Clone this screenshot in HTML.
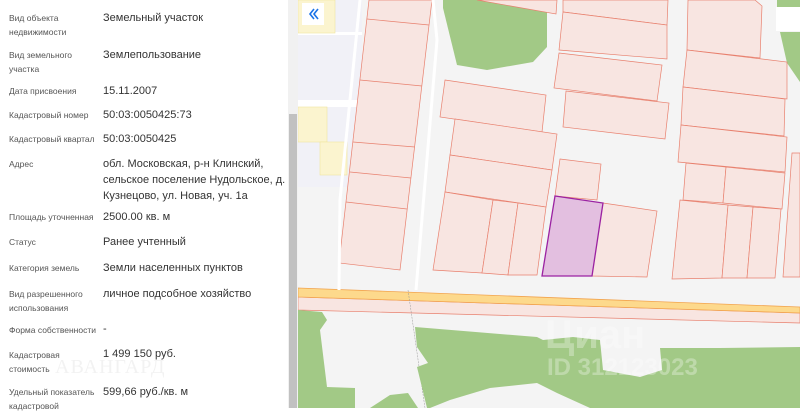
<!DOCTYPE html>
<html><head><meta charset="utf-8"><style>
body{margin:0;width:800px;height:408px;overflow:hidden;background:#fff;font-family:"Liberation Sans",sans-serif;position:relative}
.l{position:absolute;left:9px;font-size:8.5px;color:#555;line-height:14px}
.v{position:absolute;left:103px;font-size:11px;color:#333;line-height:16px}
</style></head><body>
<div class="l" style="top:11px">Вид объекта<br>недвижимости</div><div class="v" style="top:10px">Земельный участок</div>
<div class="l" style="top:48px">Вид земельного<br>участка</div><div class="v" style="top:47px">Землепользование</div>
<div class="l" style="top:84px">Дата присвоения</div><div class="v" style="top:83px">15.11.2007</div>
<div class="l" style="top:108px">Кадастровый номер</div><div class="v" style="top:107px">50:03:0050425:73</div>
<div class="l" style="top:132px">Кадастровый квартал</div><div class="v" style="top:131px">50:03:0050425</div>
<div class="l" style="top:157px">Адрес</div><div class="v" style="top:156px">обл. Московская, р-н Клинский,<br>сельское поселение Нудольское, д.<br>Кузнецово, ул. Новая, уч. 1а</div>
<div class="l" style="top:210px">Площадь уточненная</div><div class="v" style="top:209px">2500.00 кв. м</div>
<div class="l" style="top:235px">Статус</div><div class="v" style="top:234px">Ранее учтенный</div>
<div class="l" style="top:261px">Категория земель</div><div class="v" style="top:260px">Земли населенных пунктов</div>
<div class="l" style="top:287px">Вид разрешенного<br>использования</div><div class="v" style="top:286px">личное подсобное хозяйство</div>
<div class="l" style="top:323px">Форма собственности</div><div class="v" style="top:321px">-</div>
<div class="l" style="top:348px">Кадастровая<br>стоимость</div><div class="v" style="top:346px">1 499 150 руб.</div>
<div class="l" style="top:385px">Удельный показатель<br>кадастровой</div><div class="v" style="top:384px">599,66 руб./кв. м</div>
<div style="position:absolute;left:55px;top:356px;font-family:'Liberation Serif',serif;font-size:20px;color:rgba(150,150,150,0.12);letter-spacing:1px">АВАНГАРД</div>
<div style="position:absolute;left:288px;top:0;width:10px;height:408px;background:#f1f1f1"></div>
<div style="position:absolute;left:289px;top:114px;width:8px;height:294px;background:#c1c1c1"></div>
<svg style="position:absolute;left:0;top:0" width="800" height="408" viewBox="0 0 800 408">
<defs><clipPath id="c"><rect x="298" y="0" width="502" height="408"/></clipPath></defs>
<g clip-path="url(#c)">
<rect x="298" y="0" width="502" height="408" fill="#f4f4f4"/>
<rect x="298" y="0" width="64" height="187" fill="#f1f1f7"/>
<rect x="298" y="32" width="64" height="3" fill="#fff"/><rect x="298" y="100" width="64" height="7" fill="#fff"/>
<g fill="#fbf4cf" stroke="#f0e4a0" stroke-width=".6">
<rect x="298" y="0" width="37" height="33"/><rect x="298" y="107" width="29" height="35"/><rect x="320" y="142" width="27" height="33"/></g>
<path d="M443,0 L547,0 L547,47 L533,62 L487,70 L457,65 L443,8Z" fill="#a2c986"/>
<path d="M777,0H800V7H777Z M780,32H800V82L787,63Z" fill="#a2c986"/>
<rect x="776" y="7" width="24" height="24" fill="#fff"/>
<g fill="#f8e5e1" stroke="#e8806e" stroke-width=".7">
<path d="M369,0 L432,0 L400,270 L339,263Z"/>
<path d="M367,19 L429,25 M360,80 L422,86 M353,142 L415,147 M350,172 L411,178 M346,202 L407,209" fill="none"/>
<path d="M477,0 L557,0 L556,14Z"/>
<path d="M445,80 L546,95 L542,132 L440,117Z"/>
<path d="M455,119 L557,134 L552,170 L450,155Z"/>
<path d="M450,155 L552,170 L546,207 L445,192Z"/>
<path d="M445,192 L493,200 L482,273 L433,270Z"/>
<path d="M493,200 L518,203 L508,275 L482,273Z"/>
<path d="M518,203 L546,207 L537,275 L508,275Z"/>
<path d="M563,0 L668,0 L667,25 L563,12Z"/>
<path d="M563,12 L667,25 L667,59 L559,50Z"/>
<path d="M559,53 L662,65 L657,101 L554,88Z"/>
<path d="M566,91 L669,103 L665,139 L563,127Z"/>
<path d="M560,159 L601,164 L597,200 L555,196Z"/>
<path d="M603,203 L657,211 L647,277 L592,276Z"/>
<path d="M688,0 L755,0 L762,6 L760,58 L687,50Z"/>
<path d="M687,50 L787,62 L787,99 L683,87Z"/>
<path d="M683,87 L785,99 L784,136 L681,125Z"/>
<path d="M681,125 L787,137 L785,172 L678,162Z"/>
<path d="M686,163 L726,167 L723,203 L683,200Z"/>
<path d="M726,167 L785,173 L782,209 L723,203Z"/>
<path d="M680,200 L728,205 L722,278 L672,279Z"/>
<path d="M728,205 L753,207 L747,278 L722,278Z"/>
<path d="M753,207 L781,209 L775,278 L747,278Z"/>
<path d="M792,153 L800,153 L800,277 L783,277Z"/>
<path d="M298,297 L800,313 L800,323 L298,310Z"/>
</g>
<path d="M555,196 L603,203 L592,276 L542,276Z" fill="#e3bfe0" stroke="#9b22a2" stroke-width="1.3"/>
<path d="M298,288 L800,307 L800,313 L298,297Z" fill="#fdd98c" stroke="#f2a44e" stroke-width=".8"/>
<path d="M360,0 L340,200 L339,290 M433,0 L437,40 L416,290" stroke="#fff" stroke-width="3" fill="none"/>
<path d="M408,290 L425,408" stroke="#999" stroke-width=".5" stroke-dasharray="2,1" fill="none"/>
<g fill="#a2c986">
<path d="M298,310 L322,312 L327,320 L320,330 L327,387 L355,388 L355,408 L298,408Z"/>
<path d="M370,408 L390,395 L408,393 L418,408Z"/>
<path d="M415,327 L537,337 L543,340 L573,337 L600,340 L603,370 L640,377 L662,370 L660,348 L720,348 L800,347 L800,408 L590,408 L557,393 L537,383 L490,388 L450,400 L430,408 L427,408 L417,367 L428,363 L417,347Z"/>
</g>
<text x="545" y="348" font-family="Liberation Sans" font-weight="bold" font-size="40" fill="rgba(255,255,255,0.3)">Циан</text>
<text x="547" y="375" font-family="Liberation Sans" font-weight="bold" font-size="24" fill="rgba(255,255,255,0.3)">ID 312123023</text>
</g>
<rect x="302" y="3" width="22" height="22" fill="#fff"/>
<path d="M314,9 L310,14 L314,19 M318,9 L314,14 L318,19" stroke="#1a73e8" stroke-width="1.6" fill="none"/>
</svg>
</body></html>
